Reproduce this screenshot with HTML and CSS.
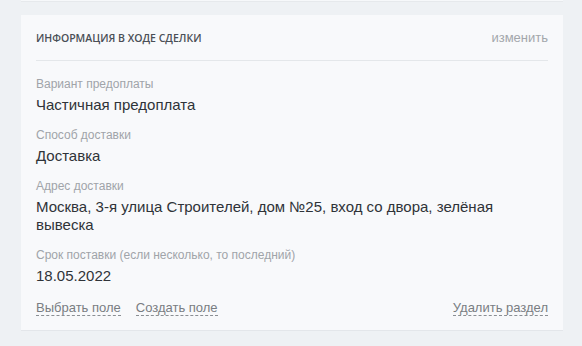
FILE: index.html
```html
<!DOCTYPE html>
<html lang="ru">
<head>
<meta charset="utf-8">
<link rel="stylesheet" href="styles.css">
</head>
<body>
<div class="prev-card"></div>
<section class="card">
  <header class="card-head">
    <h2 class="card-title">Информация в ходе сделки</h2>
    <span class="edit">изменить</span>
  </header>
  <div class="fields">
    <div class="field">
      <div class="label">Вариант предоплаты</div>
      <div class="value">Частичная предоплата</div>
    </div>
    <div class="field">
      <div class="label">Способ доставки</div>
      <div class="value">Доставка</div>
    </div>
    <div class="field">
      <div class="label">Адрес доставки</div>
      <div class="value">Москва, 3-я улица Строителей, дом №25, вход со двора, зелёная вывеска</div>
    </div>
    <div class="field">
      <div class="label">Срок поставки (если несколько, то последний)</div>
      <div class="value">18.05.2022</div>
    </div>
  </div>
  <footer class="card-foot">
    <div class="links">
      <span class="dash">Выбрать поле</span>
      <span class="dash">Создать поле</span>
    </div>
    <span class="dash">Удалить раздел</span>
  </footer>
</section>
</body>
</html>
```

FILE: styles.css
```css
html, body {
  margin: 0;
  padding: 0;
}
body {
  background: #eef1f4;
  font-family: "Liberation Sans", Arial, sans-serif;
  width: 582px;
  height: 346px;
  overflow: hidden;
}
.prev-card {
  margin: 0 19px 0 21px;
  height: 2px;
  background: #f6f8fa;
  border-bottom: 1px solid #e6e9ec;
  margin-top: -1px;
}
.card {
  margin: 13px 19px 0 21px;
  background: #f8f9fb;
  border-bottom: 1px solid #e3e6ea;
  padding: 0 15px 14px;
}
.card-head {
  height: 45px;
  display: flex;
  align-items: center;
  justify-content: space-between;
  border-bottom: 1px solid #e4e7ea;
}
.card-title {
  margin: 0;
  font-family: "Open Sans", sans-serif;
  font-weight: 600;
  font-size: 10.5px;
  text-transform: uppercase;
  color: #4a4f56;
  letter-spacing: 0;
}
.edit {
  font-size: 13px;
  color: #a3a7ab;
}
.fields {
  padding-top: 16px;
  display: flex;
  flex-direction: column;
  gap: 14px;
}
.label {
  font-size: 12px;
  line-height: 14px;
  color: #a0a4a9;
}
.value {
  margin-top: 5px;
  font-size: 15px;
  line-height: 18px;
  color: #2f3338;
}
.card-foot {
  margin-top: 15px;
  display: flex;
  justify-content: space-between;
  align-items: center;
}
.links {
  display: flex;
  gap: 15px;
}
.dash {
  font-size: 13px;
  line-height: 15px;
  color: #797d82;
  border-bottom: 1px dashed #8a8e93;
}
```
